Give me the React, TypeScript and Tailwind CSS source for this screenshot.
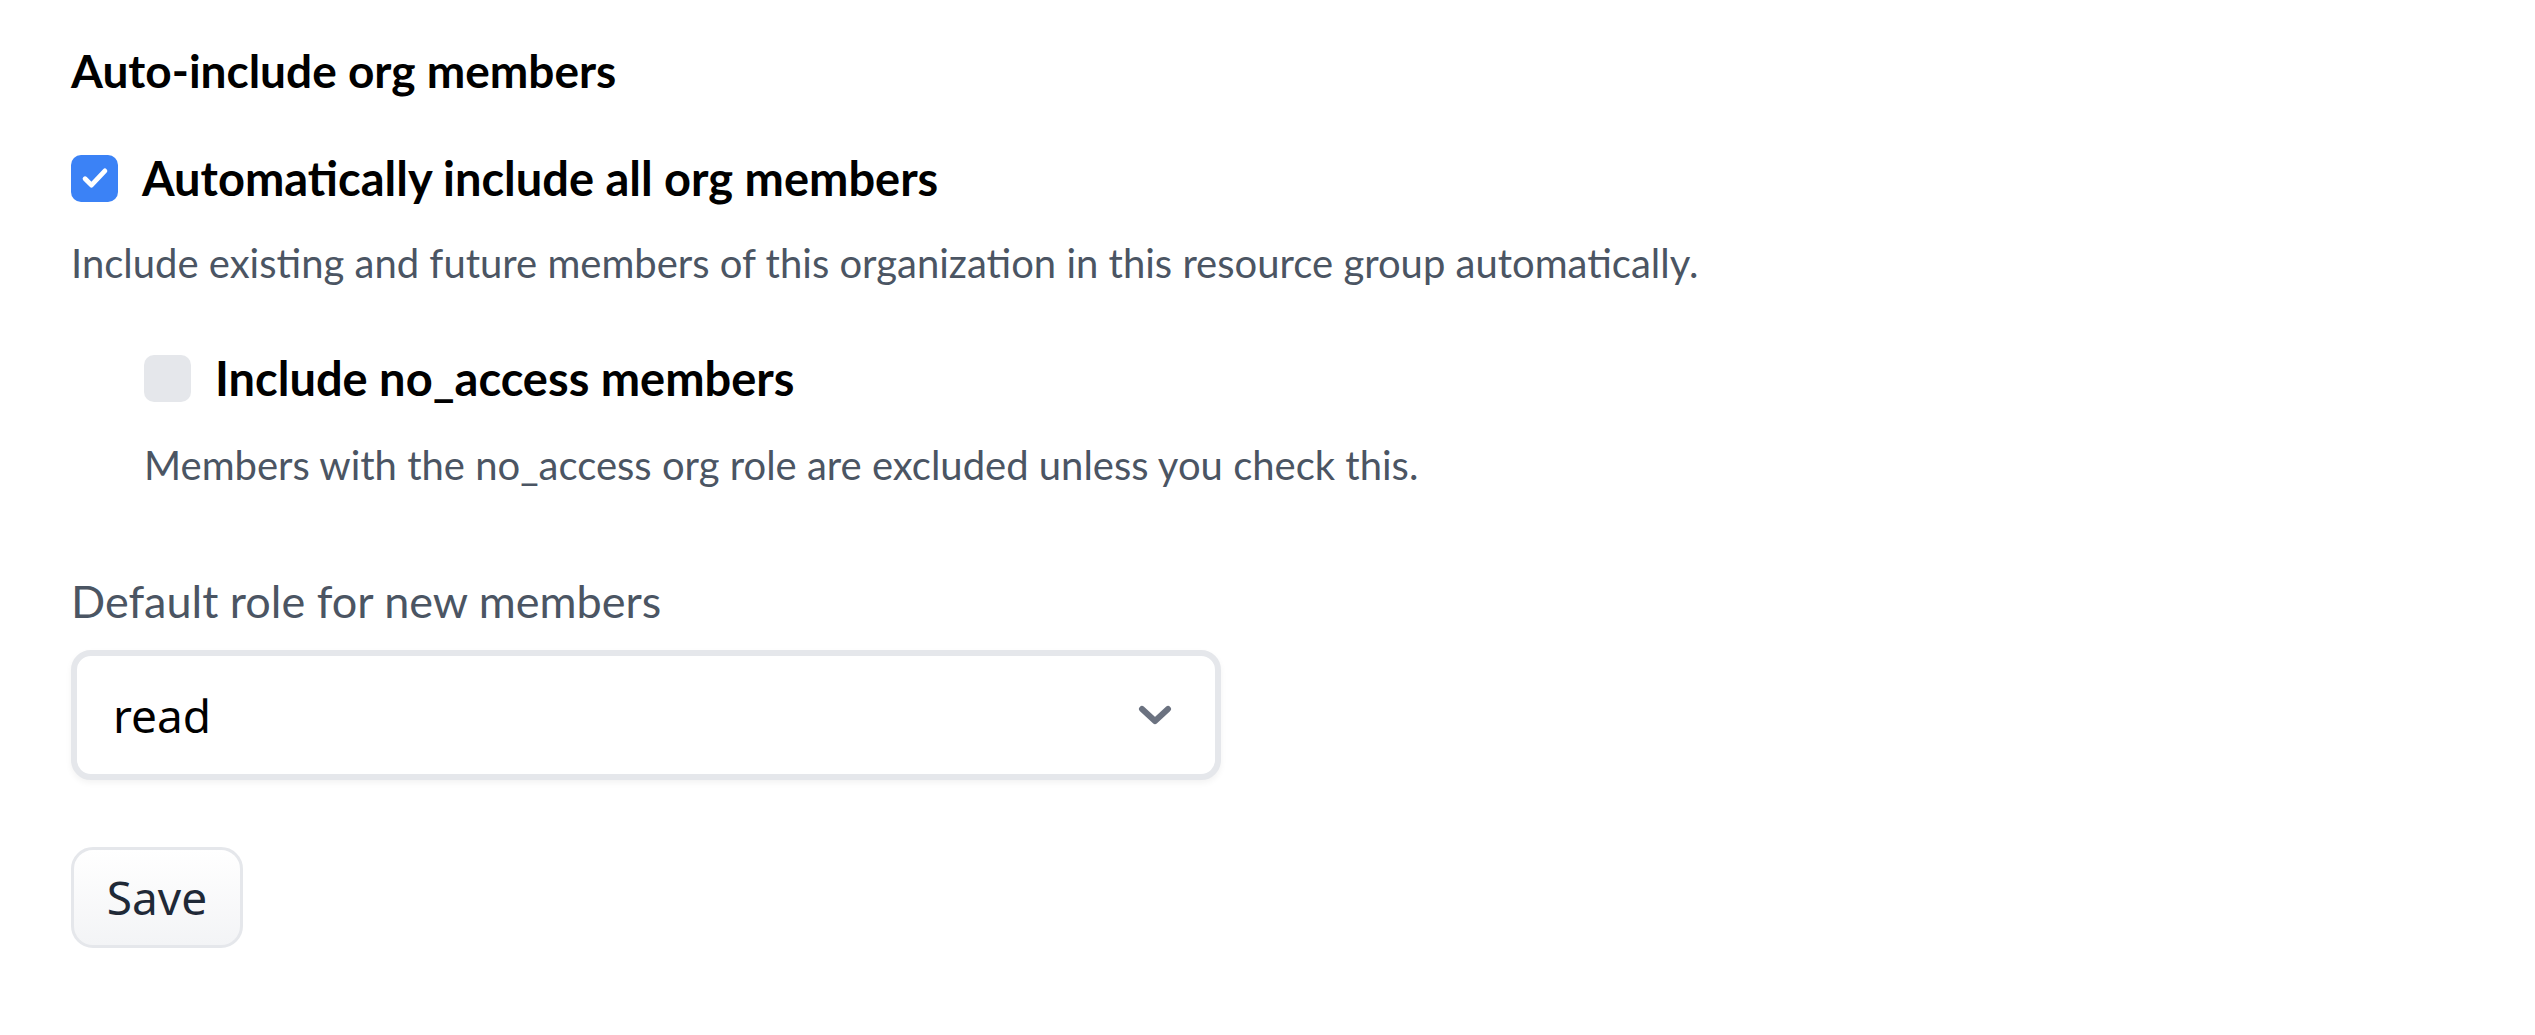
import React from "react";

export default function App() {
  return (
    <div className="min-h-[1035px] w-full bg-white pl-[71px] pt-[35px] font-['Lato','Noto_Sans',sans-serif]">
      <h2 className="text-[46px] leading-[72px] font-bold text-black">Auto-include org members</h2>

      <label className="mt-[35px] flex h-[72px] items-center gap-[24px]">
        <span className="flex h-[47px] w-[47px] items-center justify-center rounded-[10px] bg-[#3b82f6]">
          <svg width="34" height="34" viewBox="0 0 24 24" fill="none" stroke="white" strokeWidth="3.4" strokeLinecap="round" strokeLinejoin="round">
            <path d="M5 12.5l4.5 4.5 9.5-10" />
          </svg>
        </span>
        <span className="text-[47px] leading-[72px] font-bold text-black">Automatically include all org members</span>
      </label>

      <p className="mt-[18px] text-[40px] leading-[63px] text-[#4b5563]">
        Include existing and future members of this organization in this resource group automatically.
      </p>

      <div className="ml-[73px]">
        <label className="mt-[47px] flex h-[72px] items-center gap-[24px]">
          <span className="h-[47px] w-[47px] rounded-[10px] bg-[#e5e7eb]" />
          <span className="text-[47px] leading-[72px] font-bold text-black">Include no_access members</span>
        </label>
        <p className="mt-[20px] text-[40px] leading-[63px] text-[#4b5563]">
          Members with the no_access org role are excluded unless you check this.
        </p>
      </div>

      <div className="mt-[68px] text-[45px] leading-[72px] text-[#4b5563]">Default role for new members</div>

      <div className="mt-[13px] flex h-[130px] w-[1150px] items-center justify-between rounded-[20px] border-[6px] border-[#e5e7eb] bg-white pl-[36px] pr-[43px] shadow-[0_3px_6px_rgba(0,0,0,0.05)]">
        <span className="font-['Noto_Sans',sans-serif] text-[46px] text-black">read</span>
        <svg width="34" height="22" viewBox="0 0 34 22" fill="none" stroke="#6b7280" strokeWidth="6" strokeLinecap="round" strokeLinejoin="round">
          <path d="M4 5l13 12 13-12" />
        </svg>
      </div>

      <button className="mt-[67px] flex h-[101px] w-[172px] items-center justify-center rounded-[22px] border-[3px] border-[#e5e7eb] bg-gradient-to-b from-white to-[#f3f4f6] font-['Noto_Sans',sans-serif] text-[46px] text-[#1f2937]">
        Save
      </button>
    </div>
  );
}
